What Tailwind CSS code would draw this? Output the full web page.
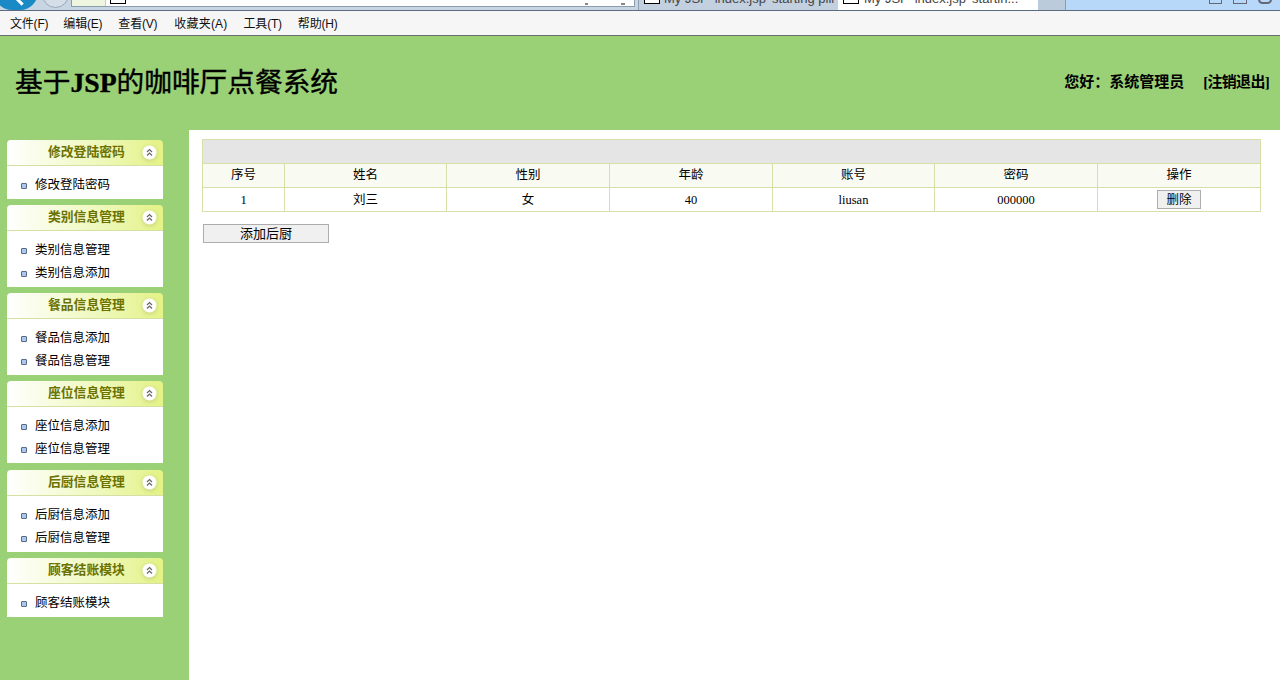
<!DOCTYPE html>
<html lang="zh-CN">
<head>
    <meta charset="UTF-8">
    <title>基于JSP的咖啡厅点餐系统</title>
    <script src="https://cdn.jsdelivr.net/npm/@tailwindcss/browser@4"></script>
</head>
<body class="h-[680px] w-[1280px] overflow-hidden bg-white font-['Liberation_Serif','Noto_Sans_CJK_SC',serif] text-black flex flex-col">

    <!-- browser tab strip, cut off at the top -->
    <div class="relative h-[11px] shrink-0 overflow-hidden border-b border-[#5b6b80] bg-[#c8d6e4]">
        <div class="absolute left-[1066px] top-0 h-[10px] w-[214px] bg-[#b7d8f8]"></div>
        <div class="absolute left-[-6px] top-[-26px] w-[44px] h-[36px] rounded-full bg-[#1a8ac6]"></div>
        <div class="absolute left-[15px] top-[0px] w-[9px] h-[3px] rotate-45 bg-white"></div>
        <div class="absolute left-[42px] top-[-19px] w-[27px] h-[27px] rounded-full border border-[#9aa7b5] bg-[#d5dee8]"></div>
        <div class="absolute left-[71px] top-[-4px] w-[564px] h-[11px] border border-[#8d9db0] bg-white overflow-hidden">
            <div class="w-[34px] h-[10px] bg-[#eef6df] border-r border-[#c0c8d0]"></div>
            <div class="absolute left-[38px] top-0 w-[16px] h-[7px] border border-black bg-white"></div>
            <div class="absolute left-[513px] top-[6px] w-[3px] h-[2px] bg-[#888]"></div>
            <div class="absolute left-[549px] top-[6px] w-[4px] h-[2px] bg-[#888]"></div>
        </div>
        <div class="absolute left-[638px] top-0 h-[10px] w-[200px] bg-[#c2d0df] border-l border-[#8d9db0] flex gap-[4px] pl-[5px] overflow-hidden">
            <div class="mt-[-4px] w-[16px] h-[8px] shrink-0 border border-black bg-white"></div>
            <span class="mt-[-9px] text-[13px] leading-[16px] font-['Liberation_Sans',sans-serif] text-[#444] whitespace-nowrap">My JSP 'index.jsp' starting pill</span>
        </div>
        <div class="absolute left-[838px] top-0 h-[10px] w-[200px] bg-white flex gap-[5px] pl-[5px] overflow-hidden">
            <div class="mt-[-4px] w-[16px] h-[8px] shrink-0 border border-black bg-white"></div>
            <span class="mt-[-9px] text-[13px] leading-[16px] font-['Liberation_Sans',sans-serif] text-[#444] whitespace-nowrap">My JSP 'index.jsp' startin...</span>
        </div>
        <div class="absolute left-[1038px] top-0 h-[10px] w-[28px] bg-[#bccbdb] border-r border-[#8d9db0]"></div>
        <div class="absolute left-[1209px] top-[-5px] w-[13px] h-[9px] border border-[#667]"></div>
        <div class="absolute left-[1233px] top-[-5px] w-[14px] h-[9px] border border-[#667]"></div>
        <div class="absolute left-[1258px] top-[-5px] w-[14px] h-[9px] rounded-full border-2 border-[#667]"></div>
    </div>

    <!-- menu bar -->
    <div class="h-[25px] shrink-0 border-b border-[#6d6d6d] bg-[#f6f6f6] flex items-center pl-[10px] pt-px gap-4 font-['Liberation_Sans','Noto_Sans_CJK_SC',sans-serif] text-xs tracking-[-0.2px] text-[#111]">
        <span class="mr-[-1px]">文件(F)</span>
        <span>编辑(E)</span>
        <span>查看(V)</span>
        <span class="ml-px tracking-[0.2px]">收藏夹(A)</span>
        <span>工具(T)</span>
        <span>帮助(H)</span>
    </div>

    <!-- header -->
    <div class="h-[94px] shrink-0 bg-[#9bd176] flex items-center justify-between pl-[15px] pr-[11px]">
        <h1 class="text-[27.7px] leading-[32px] font-normal mt-[-1px] [-webkit-text-stroke:0.4px_black]">基于<b>JSP</b>的咖啡厅点餐系统</h1>
        <div class="flex items-center gap-[19px] text-[15px] font-bold mt-[-1px]">
            <span>您好：系统管理员</span>
            <span class="tracking-[-0.7px]">[注销退出]</span>
        </div>
    </div>

    <div class="flex flex-1 min-h-0">
        <!-- left menu -->
        <div class="w-[189px] shrink-0 bg-[#9bd176] pl-[7px] pt-[10px]">
            <div class="w-[156px]">
                <div class="h-[26px] rounded-t-[4px] border-b border-[#d5e0a5] bg-gradient-to-r from-white to-[#e4f285] flex items-center pl-[41px] relative">
                    <span class="text-[12.8px] font-bold text-[#6b7200]">修改登陆密码</span>
                    <svg class="absolute right-[6px] top-[5px] drop-shadow-sm" width="15" height="15" viewBox="0 0 15 15"><circle cx="7.5" cy="7.5" r="7" fill="#fff"/><path d="M5 7l2.5-2.5L10 7M5 10.5L7.5 8 10 10.5" fill="none" stroke="#666" stroke-width="1.2"/></svg>
                </div>
                <div class="bg-white h-[33px] pt-[8px] text-[12.5px]">
                    <div class="h-[23px] flex items-center pl-[14px] gap-[8px]"><span class="w-[6px] h-[6px] rounded-[1px] bg-[#a8c8f0] border border-[#5a6a85]"></span><span>修改登陆密码</span></div>
                </div>
            </div>

            <div class="w-[156px] mt-[6px]">
                <div class="h-[26px] rounded-t-[4px] border-b border-[#d5e0a5] bg-gradient-to-r from-white to-[#e4f285] flex items-center pl-[41px] relative">
                    <span class="text-[12.8px] font-bold text-[#6b7200]">类别信息管理</span>
                    <svg class="absolute right-[6px] top-[5px] drop-shadow-sm" width="15" height="15" viewBox="0 0 15 15"><circle cx="7.5" cy="7.5" r="7" fill="#fff"/><path d="M5 7l2.5-2.5L10 7M5 10.5L7.5 8 10 10.5" fill="none" stroke="#666" stroke-width="1.2"/></svg>
                </div>
                <div class="bg-white h-[56px] pt-[8px] text-[12.5px]">
                    <div class="h-[23px] flex items-center pl-[14px] gap-[8px]"><span class="w-[6px] h-[6px] rounded-[1px] bg-[#a8c8f0] border border-[#5a6a85]"></span><span>类别信息管理</span></div>
                    <div class="h-[23px] flex items-center pl-[14px] gap-[8px]"><span class="w-[6px] h-[6px] rounded-[1px] bg-[#a8c8f0] border border-[#5a6a85]"></span><span>类别信息添加</span></div>
                </div>
            </div>

            <div class="w-[156px] mt-[6px]">
                <div class="h-[26px] rounded-t-[4px] border-b border-[#d5e0a5] bg-gradient-to-r from-white to-[#e4f285] flex items-center pl-[41px] relative">
                    <span class="text-[12.8px] font-bold text-[#6b7200]">餐品信息管理</span>
                    <svg class="absolute right-[6px] top-[5px] drop-shadow-sm" width="15" height="15" viewBox="0 0 15 15"><circle cx="7.5" cy="7.5" r="7" fill="#fff"/><path d="M5 7l2.5-2.5L10 7M5 10.5L7.5 8 10 10.5" fill="none" stroke="#666" stroke-width="1.2"/></svg>
                </div>
                <div class="bg-white h-[56px] pt-[8px] text-[12.5px]">
                    <div class="h-[23px] flex items-center pl-[14px] gap-[8px]"><span class="w-[6px] h-[6px] rounded-[1px] bg-[#a8c8f0] border border-[#5a6a85]"></span><span>餐品信息添加</span></div>
                    <div class="h-[23px] flex items-center pl-[14px] gap-[8px]"><span class="w-[6px] h-[6px] rounded-[1px] bg-[#a8c8f0] border border-[#5a6a85]"></span><span>餐品信息管理</span></div>
                </div>
            </div>

            <div class="w-[156px] mt-[6px]">
                <div class="h-[26px] rounded-t-[4px] border-b border-[#d5e0a5] bg-gradient-to-r from-white to-[#e4f285] flex items-center pl-[41px] relative">
                    <span class="text-[12.8px] font-bold text-[#6b7200]">座位信息管理</span>
                    <svg class="absolute right-[6px] top-[5px] drop-shadow-sm" width="15" height="15" viewBox="0 0 15 15"><circle cx="7.5" cy="7.5" r="7" fill="#fff"/><path d="M5 7l2.5-2.5L10 7M5 10.5L7.5 8 10 10.5" fill="none" stroke="#666" stroke-width="1.2"/></svg>
                </div>
                <div class="bg-white h-[56px] pt-[8px] text-[12.5px]">
                    <div class="h-[23px] flex items-center pl-[14px] gap-[8px]"><span class="w-[6px] h-[6px] rounded-[1px] bg-[#a8c8f0] border border-[#5a6a85]"></span><span>座位信息添加</span></div>
                    <div class="h-[23px] flex items-center pl-[14px] gap-[8px]"><span class="w-[6px] h-[6px] rounded-[1px] bg-[#a8c8f0] border border-[#5a6a85]"></span><span>座位信息管理</span></div>
                </div>
            </div>

            <div class="w-[156px] mt-[7px]">
                <div class="h-[26px] rounded-t-[4px] border-b border-[#d5e0a5] bg-gradient-to-r from-white to-[#e4f285] flex items-center pl-[41px] relative">
                    <span class="text-[12.8px] font-bold text-[#6b7200]">后厨信息管理</span>
                    <svg class="absolute right-[6px] top-[5px] drop-shadow-sm" width="15" height="15" viewBox="0 0 15 15"><circle cx="7.5" cy="7.5" r="7" fill="#fff"/><path d="M5 7l2.5-2.5L10 7M5 10.5L7.5 8 10 10.5" fill="none" stroke="#666" stroke-width="1.2"/></svg>
                </div>
                <div class="bg-white h-[56px] pt-[8px] text-[12.5px]">
                    <div class="h-[23px] flex items-center pl-[14px] gap-[8px]"><span class="w-[6px] h-[6px] rounded-[1px] bg-[#a8c8f0] border border-[#5a6a85]"></span><span>后厨信息添加</span></div>
                    <div class="h-[23px] flex items-center pl-[14px] gap-[8px]"><span class="w-[6px] h-[6px] rounded-[1px] bg-[#a8c8f0] border border-[#5a6a85]"></span><span>后厨信息管理</span></div>
                </div>
            </div>

            <div class="w-[156px] mt-[6px]">
                <div class="h-[26px] rounded-t-[4px] border-b border-[#d5e0a5] bg-gradient-to-r from-white to-[#e4f285] flex items-center pl-[41px] relative">
                    <span class="text-[12.8px] font-bold text-[#6b7200]">顾客结账模块</span>
                    <svg class="absolute right-[6px] top-[5px] drop-shadow-sm" width="15" height="15" viewBox="0 0 15 15"><circle cx="7.5" cy="7.5" r="7" fill="#fff"/><path d="M5 7l2.5-2.5L10 7M5 10.5L7.5 8 10 10.5" fill="none" stroke="#666" stroke-width="1.2"/></svg>
                </div>
                <div class="bg-white h-[33px] pt-[8px] text-[12.5px]">
                    <div class="h-[23px] flex items-center pl-[14px] gap-[8px]"><span class="w-[6px] h-[6px] rounded-[1px] bg-[#a8c8f0] border border-[#5a6a85]"></span><span>顾客结账模块</span></div>
                </div>
            </div>
        </div>

        <!-- content -->
        <div class="flex-1 pl-[13px] pt-[9px]">
            <table class="w-[1058px] table-fixed border-collapse text-[12.5px] text-center">
                <colgroup>
                    <col class="w-[82px]"><col class="w-[162px]"><col class="w-[163px]"><col class="w-[163px]"><col class="w-[162px]"><col class="w-[163px]"><col class="w-[163px]">
                </colgroup>
                <tbody>
                    <tr class="h-[24px]"><td colspan="7" class="border border-[#d6dfa8] bg-[#e5e5e5]"></td></tr>
                    <tr class="h-[24px] bg-[#f9faf1]">
                        <td class="border border-[#d6dfa8]">序号</td>
                        <td class="border border-[#d6dfa8]">姓名</td>
                        <td class="border border-[#d6dfa8]">性别</td>
                        <td class="border border-[#d6dfa8]">年龄</td>
                        <td class="border border-[#d6dfa8]">账号</td>
                        <td class="border border-[#d6dfa8]">密码</td>
                        <td class="border border-[#d6dfa8]">操作</td>
                    </tr>
                    <tr class="h-[24px]">
                        <td class="border border-[#d6dfa8] pt-[2px]">1</td>
                        <td class="border border-[#d6dfa8] pt-[2px]">刘三</td>
                        <td class="border border-[#d6dfa8] pt-[2px]">女</td>
                        <td class="border border-[#d6dfa8] pt-[2px]">40</td>
                        <td class="border border-[#d6dfa8] pt-[2px]">liusan</td>
                        <td class="border border-[#d6dfa8] pt-[2px]">000000</td>
                        <td class="border border-[#d6dfa8] p-0"><button class="block mx-auto w-[44px] h-[19px] border border-[#adadad] bg-[#f0f0f0] leading-[16px]">删除</button></td>
                    </tr>
                </tbody>
            </table>
            <button class="block mt-[12px] ml-px w-[126px] h-[19px] border border-[#adadad] bg-[#f0f0f0] text-[13px] leading-[16px]">添加后厨</button>
        </div>
    </div>
</body>
</html>
